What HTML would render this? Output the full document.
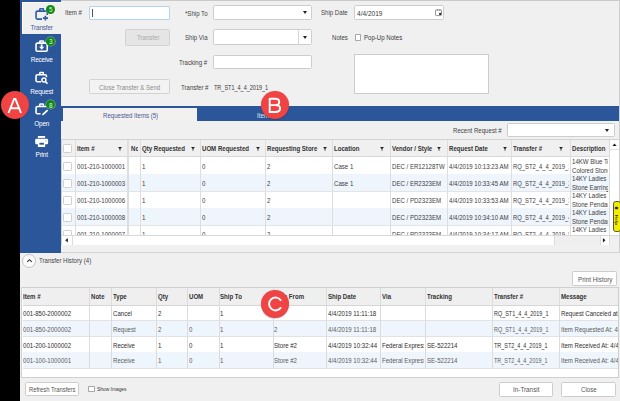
<!DOCTYPE html>
<html><head><meta charset="utf-8"><style>
html,body{margin:0;padding:0}
body{width:620px;height:401px;position:relative;overflow:hidden;background:#f0f0f0;font-family:"Liberation Sans",sans-serif}
.t{position:absolute;white-space:nowrap;line-height:10px;font-family:"Liberation Sans",sans-serif}
.clip{overflow:hidden}
</style></head><body>
<div style="position:absolute;left:0px;top:0px;width:20px;height:401px;background:#000"></div>
<div style="position:absolute;left:20px;top:0px;width:41px;height:253px;background:#2b579a"></div>
<div style="position:absolute;left:22px;top:2px;width:39px;height:32px;background:#f0f0f0;border-left:1px solid #fff;border-top:1px solid #fff;box-sizing:border-box"></div>
<div style="position:absolute;left:61px;top:0px;width:559px;height:1px;background:#c9c9c9"></div>
<div class="t" style="left:65.40px;top:8.24px;font-size:6.8px;color:#444444;transform:scaleX(0.895);transform-origin:0 0;">Item #</div>
<div style="position:absolute;left:89px;top:6px;width:81px;height:14px;background:#fff;border:1px solid #b3d3f2;box-sizing:border-box;border-radius:1px"></div>
<div style="position:absolute;left:92.3px;top:8.8px;width:0.6px;height:8.2px;background:#555"></div>
<div style="position:absolute;left:125px;top:29px;width:45px;height:17px;background:#e5e5e5;border:1px solid #d2d2d2;box-sizing:border-box;border-radius:1.5px"></div>
<div class="t" style="left:137.30px;top:33.44px;font-size:6.8px;color:#a9a9a9;transform:scaleX(0.895);transform-origin:0 0;">Transfer</div>
<div style="position:absolute;left:89px;top:79px;width:81px;height:15px;background:#f3f3f3;border:1px solid #d2d2d2;box-sizing:border-box;border-radius:1.5px"></div>
<div class="t" style="left:99.40px;top:82.74px;font-size:6.8px;color:#8c8c8c;transform:scaleX(0.895);transform-origin:0 0;">Close Transfer &amp; Send</div>
<div class="t" style="left:184.80px;top:8.54px;font-size:6.8px;color:#444444;transform:scaleX(0.895);transform-origin:0 0;">*Ship To</div>
<div style="position:absolute;left:213px;top:5px;width:99px;height:15px;background:#fff;border:1px solid #cdcdcd;box-sizing:border-box;border-radius:1.5px"></div>
<div class="t" style="left:184.90px;top:33.44px;font-size:6.8px;color:#444444;transform:scaleX(0.895);transform-origin:0 0;">Ship Via</div>
<div style="position:absolute;left:213px;top:29px;width:99px;height:16px;background:#fff;border:1px solid #cdcdcd;box-sizing:border-box;border-radius:1.5px"></div>
<div style="position:absolute;left:298.2px;top:30.2px;width:1px;height:14.2px;background:#d8d8d8"></div>
<div class="t" style="left:179.20px;top:57.54px;font-size:6.8px;color:#444444;transform:scaleX(0.895);transform-origin:0 0;">Tracking #</div>
<div style="position:absolute;left:213px;top:55px;width:99px;height:14px;background:#fff;border:1px solid #cdcdcd;box-sizing:border-box;border-radius:1.5px"></div>
<div class="t" style="left:180.60px;top:82.74px;font-size:6.8px;color:#444444;transform:scaleX(0.895);transform-origin:0 0;">Transfer #</div>
<div class="t" style="left:213.90px;top:82.74px;font-size:6.8px;color:#3a3a3a;transform:scaleX(0.81);transform-origin:0 0;">TR_ST1_4_4_2019_1</div>
<svg style="position:absolute;left:303.1px;top:11.1px" width="4" height="3" viewBox="0 0 4 3"><path d="M0 0H4L2.0 3Z" fill="#222"/></svg>
<svg style="position:absolute;left:303.2px;top:35.9px" width="4" height="3" viewBox="0 0 4 3"><path d="M0 0H4L2.0 3Z" fill="#222"/></svg>
<div class="t" style="left:321.10px;top:8.34px;font-size:6.8px;color:#444444;transform:scaleX(0.895);transform-origin:0 0;">Ship Date</div>
<div style="position:absolute;left:354px;top:5px;width:90px;height:15px;background:#fff;border:1px solid #cdcdcd;box-sizing:border-box;border-radius:1.5px"></div>
<div class="t" style="left:356.80px;top:9.14px;font-size:6.8px;color:#3a3a3a;transform:scaleX(0.96);transform-origin:0 0;">4/4/2019</div>
<svg style="position:absolute;left:434px;top:8px" width="9" height="9" viewBox="434 8 9 9"><rect x="435.5" y="10" width="6" height="5.6" rx="0.8" fill="none" stroke="#8a8a8a" stroke-width="0.9"/><path d="M437.3 9V10.6M439.9 9V10.6" stroke="#777" stroke-width="0.9"/><rect x="439.2" y="12.9" width="2" height="2" fill="#222"/></svg>
<div class="t" style="left:331.50px;top:33.34px;font-size:6.8px;color:#444444;transform:scaleX(0.895);transform-origin:0 0;">Notes</div>
<div style="position:absolute;left:355px;top:34px;width:6px;height:7px;background:#fff;border:1px solid #a8a8a8;box-sizing:border-box;border-radius:0.8px"></div>
<div class="t" style="left:363.50px;top:33.34px;font-size:6.8px;color:#3a3a3a;transform:scaleX(0.895);transform-origin:0 0;">Pop-Up Notes</div>
<div style="position:absolute;left:354px;top:54px;width:135px;height:40px;background:#fff;border:1px solid #cdcdcd;box-sizing:border-box"></div>
<div style="position:absolute;left:61px;top:106px;width:558px;height:15px;background:#2b579a"></div>
<div style="position:absolute;left:63px;top:108px;width:134.2px;height:13px;background:#f2f1ef"></div>
<div class="t" style="left:103.10px;top:110.64px;font-size:6.8px;color:#475a94;transform:scaleX(0.895);transform-origin:0 0;">Requested Items (5)</div>
<div class="t" style="left:257.00px;top:110.64px;font-size:6.8px;color:#dfe6f2;transform:scaleX(0.895);transform-origin:0 0;">Items</div>
<div class="t" style="left:453.10px;top:126.24px;font-size:6.8px;color:#444444;transform:scaleX(0.895);transform-origin:0 0;">Recent Request #</div>
<div style="position:absolute;left:507px;top:123px;width:108px;height:14px;background:#fff;border:1px solid #cdcdcd;box-sizing:border-box;border-radius:1.5px"></div>
<svg style="position:absolute;left:605.4px;top:128.6px" width="4" height="3" viewBox="0 0 4 3"><path d="M0 0H4L2.0 3Z" fill="#222"/></svg>
<div style="position:absolute;left:61px;top:139px;width:559px;height:106px;background:#fff;border:1px solid #d2d2d2;box-sizing:border-box"></div>
<div style="position:absolute;left:62px;top:140px;width:547.5px;height:16.3px;background:#f0f0f0"></div>
<div style="position:absolute;left:62px;top:156.1px;width:547.5px;height:1.4px;background:#d9d9d9"></div>
<div style="position:absolute;left:62px;top:173.70000000000002px;width:547.5px;height:1px;background:#e4e4e4"></div>
<div style="position:absolute;left:62px;top:174.4px;width:547.5px;height:17px;background:#eef5fd"></div>
<div style="position:absolute;left:62px;top:190.70000000000002px;width:547.5px;height:1px;background:#e4e4e4"></div>
<div style="position:absolute;left:62px;top:207.70000000000002px;width:547.5px;height:1px;background:#e4e4e4"></div>
<div style="position:absolute;left:62px;top:208.4px;width:547.5px;height:17px;background:#eef5fd"></div>
<div style="position:absolute;left:62px;top:224.70000000000002px;width:547.5px;height:1px;background:#e4e4e4"></div>
<div style="position:absolute;left:62px;top:241.70000000000002px;width:547.5px;height:1px;background:#e4e4e4"></div>
<div style="position:absolute;left:75.2px;top:140px;width:1.1px;height:95px;background:#dedede"></div>
<div style="position:absolute;left:127.3px;top:140px;width:1.6px;height:95px;background:#dedede"></div>
<div style="position:absolute;left:140.29999999999998px;top:140px;width:1.1px;height:95px;background:#dedede"></div>
<div style="position:absolute;left:200.0px;top:140px;width:1.1px;height:95px;background:#dedede"></div>
<div style="position:absolute;left:264.9px;top:140px;width:1.1px;height:95px;background:#dedede"></div>
<div style="position:absolute;left:332.3px;top:140px;width:1.1px;height:95px;background:#dedede"></div>
<div style="position:absolute;left:389.5px;top:140px;width:1.1px;height:95px;background:#dedede"></div>
<div style="position:absolute;left:447.0px;top:140px;width:1.1px;height:95px;background:#dedede"></div>
<div style="position:absolute;left:510.8px;top:140px;width:1.1px;height:95px;background:#dedede"></div>
<div style="position:absolute;left:569.5px;top:140px;width:1.1px;height:95px;background:#dedede"></div>
<div class="t clip" style="left:76.30px;top:144.14px;width:41.50px;padding-left:1px;box-sizing:border-box;height:10px;font-size:6.8px;color:#333333;font-weight:bold;"><span style="display:inline-block;transform:scaleX(0.895);transform-origin:0 0">Item #</span></div>
<svg style="position:absolute;left:118.3px;top:146.9px" width="4" height="3.8" viewBox="118.3 146.9 4 3.8"><path d="M118.39999999999999 147H122.2L120.7 148.9V150.7H119.89999999999999V148.9Z" fill="#222"/></svg>
<div class="t clip" style="left:129.50px;top:144.14px;width:8.20px;padding-left:1px;box-sizing:border-box;height:10px;font-size:6.8px;color:#333333;font-weight:bold;"><span style="display:inline-block;transform:scaleX(0.895);transform-origin:0 0">Note</span></div>
<div class="t clip" style="left:141.40px;top:144.14px;width:48.80px;padding-left:1px;box-sizing:border-box;height:10px;font-size:6.8px;color:#333333;font-weight:bold;"><span style="display:inline-block;transform:scaleX(0.895);transform-origin:0 0">Qty Requested</span></div>
<svg style="position:absolute;left:190.7px;top:146.9px" width="4" height="3.8" viewBox="190.7 146.9 4 3.8"><path d="M190.79999999999998 147H194.6L193.1 148.9V150.7H192.29999999999998V148.9Z" fill="#222"/></svg>
<div class="t clip" style="left:201.10px;top:144.14px;width:54.30px;padding-left:1px;box-sizing:border-box;height:10px;font-size:6.8px;color:#333333;font-weight:bold;"><span style="display:inline-block;transform:scaleX(0.895);transform-origin:0 0">UOM Requested</span></div>
<svg style="position:absolute;left:255.89999999999998px;top:146.9px" width="4" height="3.8" viewBox="255.89999999999998 146.9 4 3.8"><path d="M255.99999999999997 147H259.79999999999995L258.29999999999995 148.9V150.7H257.5V148.9Z" fill="#222"/></svg>
<div class="t clip" style="left:266.00px;top:144.14px;width:56.70px;padding-left:1px;box-sizing:border-box;height:10px;font-size:6.8px;color:#333333;font-weight:bold;"><span style="display:inline-block;transform:scaleX(0.895);transform-origin:0 0">Requesting Store</span></div>
<svg style="position:absolute;left:323.2px;top:146.9px" width="4" height="3.8" viewBox="323.2 146.9 4 3.8"><path d="M323.3 147H327.09999999999997L325.59999999999997 148.9V150.7H324.8V148.9Z" fill="#222"/></svg>
<div class="t clip" style="left:333.40px;top:144.14px;width:46.10px;padding-left:1px;box-sizing:border-box;height:10px;font-size:6.8px;color:#333333;font-weight:bold;"><span style="display:inline-block;transform:scaleX(0.895);transform-origin:0 0">Location</span></div>
<svg style="position:absolute;left:380px;top:146.9px" width="4" height="3.8" viewBox="380 146.9 4 3.8"><path d="M380.1 147H383.9L382.4 148.9V150.7H381.6V148.9Z" fill="#222"/></svg>
<div class="t clip" style="left:390.60px;top:144.14px;width:46.30px;padding-left:1px;box-sizing:border-box;height:10px;font-size:6.8px;color:#333333;font-weight:bold;"><span style="display:inline-block;transform:scaleX(0.895);transform-origin:0 0">Vendor / Style</span></div>
<svg style="position:absolute;left:437.4px;top:146.9px" width="4" height="3.8" viewBox="437.4 146.9 4 3.8"><path d="M437.5 147H441.29999999999995L439.79999999999995 148.9V150.7H439.0V148.9Z" fill="#222"/></svg>
<div class="t clip" style="left:448.10px;top:144.14px;width:53.90px;padding-left:1px;box-sizing:border-box;height:10px;font-size:6.8px;color:#333333;font-weight:bold;"><span style="display:inline-block;transform:scaleX(0.895);transform-origin:0 0">Request Date</span></div>
<svg style="position:absolute;left:502.5px;top:146.9px" width="4" height="3.8" viewBox="502.5 146.9 4 3.8"><path d="M502.6 147H506.4L504.9 148.9V150.7H504.1V148.9Z" fill="#222"/></svg>
<div class="t clip" style="left:511.90px;top:144.14px;width:47.00px;padding-left:1px;box-sizing:border-box;height:10px;font-size:6.8px;color:#333333;font-weight:bold;"><span style="display:inline-block;transform:scaleX(0.895);transform-origin:0 0">Transfer #</span></div>
<svg style="position:absolute;left:559.4px;top:146.9px" width="4" height="3.8" viewBox="559.4 146.9 4 3.8"><path d="M559.5 147H563.3L561.8 148.9V150.7H561.0V148.9Z" fill="#222"/></svg>
<div class="t clip" style="left:570.60px;top:144.14px;width:37.80px;padding-left:1px;box-sizing:border-box;height:10px;font-size:6.8px;color:#333333;font-weight:bold;"><span style="display:inline-block;transform:scaleX(0.895);transform-origin:0 0">Description</span></div>
<div style="position:absolute;left:63px;top:144px;width:9px;height:9px;background:#fff;border:1px solid #d0d0d0;box-sizing:border-box;border-radius:1.2px"></div>
<div style="position:absolute;left:63px;top:162px;width:9px;height:9px;background:#fff;border:1px solid #d0d0d0;box-sizing:border-box;border-radius:1.2px"></div>
<div class="t clip" style="left:76.30px;top:162.04px;width:50.50px;padding-left:1px;box-sizing:border-box;height:10px;font-size:6.8px;color:#404040;"><span style="display:inline-block;transform:scaleX(0.895);transform-origin:0 0">001-210-1000001</span></div>
<div class="t clip" style="left:141.40px;top:162.04px;width:58.10px;padding-left:1px;box-sizing:border-box;height:10px;font-size:6.8px;color:#404040;"><span style="display:inline-block;transform:scaleX(0.895);transform-origin:0 0">1</span></div>
<div class="t clip" style="left:201.10px;top:162.04px;width:63.30px;padding-left:1px;box-sizing:border-box;height:10px;font-size:6.8px;color:#404040;"><span style="display:inline-block;transform:scaleX(0.895);transform-origin:0 0">0</span></div>
<div class="t clip" style="left:266.00px;top:162.04px;width:65.80px;padding-left:1px;box-sizing:border-box;height:10px;font-size:6.8px;color:#404040;"><span style="display:inline-block;transform:scaleX(0.895);transform-origin:0 0">2</span></div>
<div class="t clip" style="left:333.40px;top:162.04px;width:55.60px;padding-left:1px;box-sizing:border-box;height:10px;font-size:6.8px;color:#404040;"><span style="display:inline-block;transform:scaleX(0.895);transform-origin:0 0">Case 1</span></div>
<div class="t clip" style="left:390.60px;top:162.04px;width:55.90px;padding-left:1px;box-sizing:border-box;height:10px;font-size:6.8px;color:#404040;"><span style="display:inline-block;transform:scaleX(0.895);transform-origin:0 0">DEC / ER12128TW</span></div>
<div class="t clip" style="left:448.10px;top:162.04px;width:62.20px;padding-left:1px;box-sizing:border-box;height:10px;font-size:6.8px;color:#404040;"><span style="display:inline-block;transform:scaleX(0.895);transform-origin:0 0">4/4/2019 10:13:23 AM</span></div>
<div class="t clip" style="left:511.90px;top:162.04px;width:57.10px;padding-left:1px;box-sizing:border-box;height:10px;font-size:6.8px;color:#404040;"><span style="display:inline-block;transform:scaleX(0.86);transform-origin:0 0">RQ_ST2_4_4_2019_1</span></div>
<div class="t clip" style="left:570.60px;top:157.44px;width:37.80px;padding-left:1px;box-sizing:border-box;height:10px;font-size:6.8px;color:#404040;"><span style="display:inline-block;transform:scaleX(0.895);transform-origin:0 0">14KW Blue Topaz</span></div>
<div class="t clip" style="left:570.60px;top:165.94px;width:37.80px;padding-left:1px;box-sizing:border-box;height:10px;font-size:6.8px;color:#404040;"><span style="display:inline-block;transform:scaleX(0.895);transform-origin:0 0">Colored Stone</span></div>
<div style="position:absolute;left:63px;top:179px;width:9px;height:9px;background:#fff;border:1px solid #d0d0d0;box-sizing:border-box;border-radius:1.2px"></div>
<div class="t clip" style="left:76.30px;top:179.04px;width:50.50px;padding-left:1px;box-sizing:border-box;height:10px;font-size:6.8px;color:#404040;"><span style="display:inline-block;transform:scaleX(0.895);transform-origin:0 0">001-210-1000003</span></div>
<div class="t clip" style="left:141.40px;top:179.04px;width:58.10px;padding-left:1px;box-sizing:border-box;height:10px;font-size:6.8px;color:#404040;"><span style="display:inline-block;transform:scaleX(0.895);transform-origin:0 0">1</span></div>
<div class="t clip" style="left:201.10px;top:179.04px;width:63.30px;padding-left:1px;box-sizing:border-box;height:10px;font-size:6.8px;color:#404040;"><span style="display:inline-block;transform:scaleX(0.895);transform-origin:0 0">0</span></div>
<div class="t clip" style="left:266.00px;top:179.04px;width:65.80px;padding-left:1px;box-sizing:border-box;height:10px;font-size:6.8px;color:#404040;"><span style="display:inline-block;transform:scaleX(0.895);transform-origin:0 0">2</span></div>
<div class="t clip" style="left:333.40px;top:179.04px;width:55.60px;padding-left:1px;box-sizing:border-box;height:10px;font-size:6.8px;color:#404040;"><span style="display:inline-block;transform:scaleX(0.895);transform-origin:0 0">Case 1</span></div>
<div class="t clip" style="left:390.60px;top:179.04px;width:55.90px;padding-left:1px;box-sizing:border-box;height:10px;font-size:6.8px;color:#404040;"><span style="display:inline-block;transform:scaleX(0.895);transform-origin:0 0">DEC / ER2323EM</span></div>
<div class="t clip" style="left:448.10px;top:179.04px;width:62.20px;padding-left:1px;box-sizing:border-box;height:10px;font-size:6.8px;color:#404040;"><span style="display:inline-block;transform:scaleX(0.895);transform-origin:0 0">4/4/2019 10:33:45 AM</span></div>
<div class="t clip" style="left:511.90px;top:179.04px;width:57.10px;padding-left:1px;box-sizing:border-box;height:10px;font-size:6.8px;color:#404040;"><span style="display:inline-block;transform:scaleX(0.86);transform-origin:0 0">RQ_ST2_4_4_2019_2</span></div>
<div class="t clip" style="left:570.60px;top:174.44px;width:37.80px;padding-left:1px;box-sizing:border-box;height:10px;font-size:6.8px;color:#404040;"><span style="display:inline-block;transform:scaleX(0.895);transform-origin:0 0">14KY Ladies Earring</span></div>
<div class="t clip" style="left:570.60px;top:182.94px;width:37.80px;padding-left:1px;box-sizing:border-box;height:10px;font-size:6.8px;color:#404040;"><span style="display:inline-block;transform:scaleX(0.895);transform-origin:0 0">Stone Earring</span></div>
<div style="position:absolute;left:63px;top:196px;width:9px;height:9px;background:#fff;border:1px solid #d0d0d0;box-sizing:border-box;border-radius:1.2px"></div>
<div class="t clip" style="left:76.30px;top:196.04px;width:50.50px;padding-left:1px;box-sizing:border-box;height:10px;font-size:6.8px;color:#404040;"><span style="display:inline-block;transform:scaleX(0.895);transform-origin:0 0">001-210-1000006</span></div>
<div class="t clip" style="left:141.40px;top:196.04px;width:58.10px;padding-left:1px;box-sizing:border-box;height:10px;font-size:6.8px;color:#404040;"><span style="display:inline-block;transform:scaleX(0.895);transform-origin:0 0">1</span></div>
<div class="t clip" style="left:201.10px;top:196.04px;width:63.30px;padding-left:1px;box-sizing:border-box;height:10px;font-size:6.8px;color:#404040;"><span style="display:inline-block;transform:scaleX(0.895);transform-origin:0 0">0</span></div>
<div class="t clip" style="left:266.00px;top:196.04px;width:65.80px;padding-left:1px;box-sizing:border-box;height:10px;font-size:6.8px;color:#404040;"><span style="display:inline-block;transform:scaleX(0.895);transform-origin:0 0">2</span></div>
<div class="t clip" style="left:390.60px;top:196.04px;width:55.90px;padding-left:1px;box-sizing:border-box;height:10px;font-size:6.8px;color:#404040;"><span style="display:inline-block;transform:scaleX(0.895);transform-origin:0 0">DEC / PD2323EM</span></div>
<div class="t clip" style="left:448.10px;top:196.04px;width:62.20px;padding-left:1px;box-sizing:border-box;height:10px;font-size:6.8px;color:#404040;"><span style="display:inline-block;transform:scaleX(0.895);transform-origin:0 0">4/4/2019 10:33:53 AM</span></div>
<div class="t clip" style="left:511.90px;top:196.04px;width:57.10px;padding-left:1px;box-sizing:border-box;height:10px;font-size:6.8px;color:#404040;"><span style="display:inline-block;transform:scaleX(0.86);transform-origin:0 0">RQ_ST2_4_4_2019_3</span></div>
<div class="t clip" style="left:570.60px;top:191.44px;width:37.80px;padding-left:1px;box-sizing:border-box;height:10px;font-size:6.8px;color:#404040;"><span style="display:inline-block;transform:scaleX(0.895);transform-origin:0 0">14KY Ladies Earring</span></div>
<div class="t clip" style="left:570.60px;top:199.94px;width:37.80px;padding-left:1px;box-sizing:border-box;height:10px;font-size:6.8px;color:#404040;"><span style="display:inline-block;transform:scaleX(0.895);transform-origin:0 0">Stone Pendant</span></div>
<div style="position:absolute;left:63px;top:213px;width:9px;height:9px;background:#fff;border:1px solid #d0d0d0;box-sizing:border-box;border-radius:1.2px"></div>
<div class="t clip" style="left:76.30px;top:213.04px;width:50.50px;padding-left:1px;box-sizing:border-box;height:10px;font-size:6.8px;color:#404040;"><span style="display:inline-block;transform:scaleX(0.895);transform-origin:0 0">001-210-1000008</span></div>
<div class="t clip" style="left:141.40px;top:213.04px;width:58.10px;padding-left:1px;box-sizing:border-box;height:10px;font-size:6.8px;color:#404040;"><span style="display:inline-block;transform:scaleX(0.895);transform-origin:0 0">1</span></div>
<div class="t clip" style="left:201.10px;top:213.04px;width:63.30px;padding-left:1px;box-sizing:border-box;height:10px;font-size:6.8px;color:#404040;"><span style="display:inline-block;transform:scaleX(0.895);transform-origin:0 0">0</span></div>
<div class="t clip" style="left:266.00px;top:213.04px;width:65.80px;padding-left:1px;box-sizing:border-box;height:10px;font-size:6.8px;color:#404040;"><span style="display:inline-block;transform:scaleX(0.895);transform-origin:0 0">2</span></div>
<div class="t clip" style="left:390.60px;top:213.04px;width:55.90px;padding-left:1px;box-sizing:border-box;height:10px;font-size:6.8px;color:#404040;"><span style="display:inline-block;transform:scaleX(0.895);transform-origin:0 0">DEC / PD2323EM</span></div>
<div class="t clip" style="left:448.10px;top:213.04px;width:62.20px;padding-left:1px;box-sizing:border-box;height:10px;font-size:6.8px;color:#404040;"><span style="display:inline-block;transform:scaleX(0.895);transform-origin:0 0">4/4/2019 10:34:10 AM</span></div>
<div class="t clip" style="left:511.90px;top:213.04px;width:57.10px;padding-left:1px;box-sizing:border-box;height:10px;font-size:6.8px;color:#404040;"><span style="display:inline-block;transform:scaleX(0.86);transform-origin:0 0">RQ_ST2_4_4_2019_4</span></div>
<div class="t clip" style="left:570.60px;top:208.44px;width:37.80px;padding-left:1px;box-sizing:border-box;height:10px;font-size:6.8px;color:#404040;"><span style="display:inline-block;transform:scaleX(0.895);transform-origin:0 0">14KY Ladies Earring</span></div>
<div class="t clip" style="left:570.60px;top:216.94px;width:37.80px;padding-left:1px;box-sizing:border-box;height:10px;font-size:6.8px;color:#404040;"><span style="display:inline-block;transform:scaleX(0.895);transform-origin:0 0">Stone Pendant</span></div>
<div style="position:absolute;left:63px;top:230px;width:9px;height:9px;background:#fff;border:1px solid #d0d0d0;box-sizing:border-box;border-radius:1.2px"></div>
<div class="t clip" style="left:76.30px;top:230.04px;width:50.50px;padding-left:1px;box-sizing:border-box;height:10px;font-size:6.8px;color:#404040;"><span style="display:inline-block;transform:scaleX(0.895);transform-origin:0 0">001-210-1000007</span></div>
<div class="t clip" style="left:141.40px;top:230.04px;width:58.10px;padding-left:1px;box-sizing:border-box;height:10px;font-size:6.8px;color:#404040;"><span style="display:inline-block;transform:scaleX(0.895);transform-origin:0 0">1</span></div>
<div class="t clip" style="left:201.10px;top:230.04px;width:63.30px;padding-left:1px;box-sizing:border-box;height:10px;font-size:6.8px;color:#404040;"><span style="display:inline-block;transform:scaleX(0.895);transform-origin:0 0">0</span></div>
<div class="t clip" style="left:266.00px;top:230.04px;width:65.80px;padding-left:1px;box-sizing:border-box;height:10px;font-size:6.8px;color:#404040;"><span style="display:inline-block;transform:scaleX(0.895);transform-origin:0 0">2</span></div>
<div class="t clip" style="left:390.60px;top:230.04px;width:55.90px;padding-left:1px;box-sizing:border-box;height:10px;font-size:6.8px;color:#404040;"><span style="display:inline-block;transform:scaleX(0.895);transform-origin:0 0">DEC / PD2323EM</span></div>
<div class="t clip" style="left:448.10px;top:230.04px;width:62.20px;padding-left:1px;box-sizing:border-box;height:10px;font-size:6.8px;color:#404040;"><span style="display:inline-block;transform:scaleX(0.895);transform-origin:0 0">4/4/2019 10:34:17 AM</span></div>
<div class="t clip" style="left:511.90px;top:230.04px;width:57.10px;padding-left:1px;box-sizing:border-box;height:10px;font-size:6.8px;color:#404040;"><span style="display:inline-block;transform:scaleX(0.86);transform-origin:0 0">RQ_ST2_4_4_2019_5</span></div>
<div class="t clip" style="left:570.60px;top:225.44px;width:37.80px;padding-left:1px;box-sizing:border-box;height:10px;font-size:6.8px;color:#404040;"><span style="display:inline-block;transform:scaleX(0.895);transform-origin:0 0">14KY Ladies Earring</span></div>
<div class="t clip" style="left:570.60px;top:233.94px;width:37.80px;padding-left:1px;box-sizing:border-box;height:10px;font-size:6.8px;color:#404040;"><span style="display:inline-block;transform:scaleX(0.895);transform-origin:0 0">Stone Pendant</span></div>
<div style="position:absolute;left:62px;top:235px;width:547px;height:10px;background:#efefef;border-top:1px solid #d8d8d8;box-sizing:border-box"></div>
<div style="position:absolute;left:62px;top:235.6px;width:9.5px;height:9px;background:#fff"></div>
<div style="position:absolute;left:72px;top:236px;width:483px;height:9px;background:#fff;border-left:1px solid #dcdcdc;border-right:1px solid #dcdcdc;box-sizing:border-box"></div>
<svg style="position:absolute;left:65px;top:237.5px" width="3" height="5" viewBox="65 237.5 3 5"><path d="M67.8 237.6V242.1L65.2 239.85Z" fill="#222"/></svg>
<div style="position:absolute;left:600px;top:236px;width:9px;height:9px;background:#fff;border-left:1px solid #dcdcdc;box-sizing:border-box"></div>
<svg style="position:absolute;left:602px;top:237.5px" width="4" height="5" viewBox="602 237.5 4 5"><path d="M602.9 237.6V242.1L605.5 239.85Z" fill="#222"/></svg>
<div style="position:absolute;left:609px;top:140px;width:10px;height:95px;background:#fff;border-left:1px solid #dcdcdc;box-sizing:border-box"></div>
<div style="position:absolute;left:609.2px;top:149.2px;width:9.8px;height:1px;background:#e2e2e2"></div>
<svg style="position:absolute;left:611px;top:142px" width="6" height="5" viewBox="611 142 6 5"><path d="M612.3 146H616.7L614.5 143.5Z" fill="#222"/></svg>
<div style="position:absolute;left:609px;top:235px;width:10px;height:10px;background:#f0f0f0;border-left:1px solid #dcdcdc;border-top:1px solid #d8d8d8;box-sizing:border-box"></div>
<div style="position:absolute;left:619px;top:0px;width:1px;height:253px;background:#cfcfcf"></div>
<div style="position:absolute;left:613.2px;top:200.9px;width:8px;height:30.8px;background:#f3ee00;border:0.9px solid #5a5830;border-radius:2.8px;box-sizing:border-box"></div>
<div style="position:absolute;left:615.1px;top:206.8px;width:2.5px;height:2.5px;border-radius:50%;background:#1e2448;box-shadow:0 0 0 0.5px #888"></div>
<div class="t" style="left:608.4px;top:218px;width:16px;height:4px;font-size:4.2px;line-height:4px;text-align:center;color:#2a2a2a;font-weight:bold;letter-spacing:0.3px;transform:rotate(90deg)">Help</div>
<div style="position:absolute;left:61px;top:252px;width:559px;height:1px;background:#d4d4d4"></div>
<div style="position:absolute;left:22.1px;top:253.8px;width:14.3px;height:14.3px;border-radius:50%;background:#fbfbfb;border:1px solid #c4c4c4;box-sizing:border-box"></div>
<svg style="position:absolute;left:26px;top:258px" width="7" height="5" viewBox="26 258 7 5"><path d="M27.2 261.8L29.5 259.7L31.8 261.8" fill="none" stroke="#333" stroke-width="1.1"/></svg>
<div class="t" style="left:39.30px;top:256.44px;font-size:6.8px;color:#444;transform:scaleX(0.895);transform-origin:0 0;">Transfer History (4)</div>
<div style="position:absolute;left:572px;top:271px;width:45px;height:15px;background:#fff;border:1px solid #cdcdcd;box-sizing:border-box;border-radius:1.5px"></div>
<div class="t" style="left:578.10px;top:274.64px;font-size:6.8px;color:#555;transform:scaleX(0.93);transform-origin:0 0;">Print History</div>
<div style="position:absolute;left:21px;top:287px;width:598px;height:91px;background:#fff;border:1px solid #cfcfcf;box-sizing:border-box"></div>
<div style="position:absolute;left:22.5px;top:288.2px;width:595px;height:17px;background:#efefef"></div>
<div style="position:absolute;left:22.5px;top:304.7px;width:595px;height:1px;background:#d6d6d6"></div>
<div style="position:absolute;left:22.5px;top:320.4px;width:595px;height:1px;background:#e2e2e2"></div>
<div style="position:absolute;left:22.5px;top:320.9px;width:595px;height:15.7px;background:#eef5fc"></div>
<div style="position:absolute;left:22.5px;top:336.09999999999997px;width:595px;height:1px;background:#e2e2e2"></div>
<div style="position:absolute;left:22.5px;top:351.79999999999995px;width:595px;height:1px;background:#e2e2e2"></div>
<div style="position:absolute;left:22.5px;top:352.29999999999995px;width:595px;height:15.7px;background:#eef5fc"></div>
<div style="position:absolute;left:22.5px;top:367.49999999999994px;width:595px;height:1px;background:#e2e2e2"></div>
<div style="position:absolute;left:88.8px;top:288.2px;width:1px;height:79.8px;background:#dcdcdc"></div>
<div style="position:absolute;left:111.3px;top:288.2px;width:1px;height:79.8px;background:#dcdcdc"></div>
<div style="position:absolute;left:156.2px;top:288.2px;width:1px;height:79.8px;background:#dcdcdc"></div>
<div style="position:absolute;left:187.4px;top:288.2px;width:1px;height:79.8px;background:#dcdcdc"></div>
<div style="position:absolute;left:218.5px;top:288.2px;width:1px;height:79.8px;background:#dcdcdc"></div>
<div style="position:absolute;left:272.6px;top:288.2px;width:1px;height:79.8px;background:#dcdcdc"></div>
<div style="position:absolute;left:326.3px;top:288.2px;width:1px;height:79.8px;background:#dcdcdc"></div>
<div style="position:absolute;left:380.2px;top:288.2px;width:1px;height:79.8px;background:#dcdcdc"></div>
<div style="position:absolute;left:425.2px;top:288.2px;width:1px;height:79.8px;background:#dcdcdc"></div>
<div style="position:absolute;left:492.2px;top:288.2px;width:1px;height:79.8px;background:#dcdcdc"></div>
<div style="position:absolute;left:559.3px;top:288.2px;width:1px;height:79.8px;background:#dcdcdc"></div>
<div class="t clip" style="left:22.30px;top:292.04px;width:65.70px;padding-left:1px;box-sizing:border-box;height:10px;font-size:6.8px;color:#333333;font-weight:bold;"><span style="display:inline-block;transform:scaleX(0.895);transform-origin:0 0">Item #</span></div>
<div class="t clip" style="left:89.60px;top:292.04px;width:20.90px;padding-left:1px;box-sizing:border-box;height:10px;font-size:6.8px;color:#333333;font-weight:bold;"><span style="display:inline-block;transform:scaleX(0.895);transform-origin:0 0">Note</span></div>
<div class="t clip" style="left:112.10px;top:292.04px;width:43.30px;padding-left:1px;box-sizing:border-box;height:10px;font-size:6.8px;color:#333333;font-weight:bold;"><span style="display:inline-block;transform:scaleX(0.895);transform-origin:0 0">Type</span></div>
<div class="t clip" style="left:157.00px;top:292.04px;width:29.60px;padding-left:1px;box-sizing:border-box;height:10px;font-size:6.8px;color:#333333;font-weight:bold;"><span style="display:inline-block;transform:scaleX(0.895);transform-origin:0 0">Qty</span></div>
<div class="t clip" style="left:188.20px;top:292.04px;width:29.50px;padding-left:1px;box-sizing:border-box;height:10px;font-size:6.8px;color:#333333;font-weight:bold;"><span style="display:inline-block;transform:scaleX(0.895);transform-origin:0 0">UOM</span></div>
<div class="t clip" style="left:219.30px;top:292.04px;width:52.50px;padding-left:1px;box-sizing:border-box;height:10px;font-size:6.8px;color:#333333;font-weight:bold;"><span style="display:inline-block;transform:scaleX(0.895);transform-origin:0 0">Ship To</span></div>
<div class="t clip" style="left:273.40px;top:292.04px;width:52.10px;padding-left:1px;box-sizing:border-box;height:10px;font-size:6.8px;color:#333333;font-weight:bold;"><span style="display:inline-block;transform:scaleX(0.895);transform-origin:0 0">Ship From</span></div>
<div class="t clip" style="left:327.10px;top:292.04px;width:52.30px;padding-left:1px;box-sizing:border-box;height:10px;font-size:6.8px;color:#333333;font-weight:bold;"><span style="display:inline-block;transform:scaleX(0.895);transform-origin:0 0">Ship Date</span></div>
<div class="t clip" style="left:381.00px;top:292.04px;width:43.40px;padding-left:1px;box-sizing:border-box;height:10px;font-size:6.8px;color:#333333;font-weight:bold;"><span style="display:inline-block;transform:scaleX(0.895);transform-origin:0 0">Via</span></div>
<div class="t clip" style="left:426.00px;top:292.04px;width:65.40px;padding-left:1px;box-sizing:border-box;height:10px;font-size:6.8px;color:#333333;font-weight:bold;"><span style="display:inline-block;transform:scaleX(0.895);transform-origin:0 0">Tracking</span></div>
<div class="t clip" style="left:493.00px;top:292.04px;width:65.50px;padding-left:1px;box-sizing:border-box;height:10px;font-size:6.8px;color:#333333;font-weight:bold;"><span style="display:inline-block;transform:scaleX(0.895);transform-origin:0 0">Transfer #</span></div>
<div class="t clip" style="left:560.10px;top:292.04px;width:57.60px;padding-left:1px;box-sizing:border-box;height:10px;font-size:6.8px;color:#333333;font-weight:bold;"><span style="display:inline-block;transform:scaleX(0.895);transform-origin:0 0">Message</span></div>
<div class="t clip" style="left:22.30px;top:309.24px;width:65.70px;padding-left:1px;box-sizing:border-box;height:10px;font-size:6.8px;color:#2e2e2e;"><span style="display:inline-block;transform:scaleX(0.895);transform-origin:0 0">001-850-2000002</span></div>
<div class="t clip" style="left:112.10px;top:309.24px;width:43.30px;padding-left:1px;box-sizing:border-box;height:10px;font-size:6.8px;color:#2e2e2e;"><span style="display:inline-block;transform:scaleX(0.895);transform-origin:0 0">Cancel</span></div>
<div class="t clip" style="left:157.00px;top:309.24px;width:29.60px;padding-left:1px;box-sizing:border-box;height:10px;font-size:6.8px;color:#2e2e2e;"><span style="display:inline-block;transform:scaleX(0.895);transform-origin:0 0">2</span></div>
<div class="t clip" style="left:219.30px;top:309.24px;width:52.50px;padding-left:1px;box-sizing:border-box;height:10px;font-size:6.8px;color:#2e2e2e;"><span style="display:inline-block;transform:scaleX(0.895);transform-origin:0 0">1</span></div>
<div class="t clip" style="left:327.10px;top:309.24px;width:52.30px;padding-left:1px;box-sizing:border-box;height:10px;font-size:6.8px;color:#2e2e2e;"><span style="display:inline-block;transform:scaleX(0.895);transform-origin:0 0">4/4/2019 11:11:18</span></div>
<div class="t clip" style="left:493.00px;top:309.24px;width:65.50px;padding-left:1px;box-sizing:border-box;height:10px;font-size:6.8px;color:#2e2e2e;"><span style="display:inline-block;transform:scaleX(0.8);transform-origin:0 0">RQ_ST1_4_4_2019_1</span></div>
<div class="t clip" style="left:560.10px;top:309.24px;width:57.60px;padding-left:1px;box-sizing:border-box;height:10px;font-size:6.8px;color:#2e2e2e;"><span style="display:inline-block;transform:scaleX(0.895);transform-origin:0 0">Request Canceled at 4/4/2019</span></div>
<div class="t clip" style="left:22.30px;top:324.94px;width:65.70px;padding-left:1px;box-sizing:border-box;height:10px;font-size:6.8px;color:#5c5c5c;"><span style="display:inline-block;transform:scaleX(0.895);transform-origin:0 0">001-850-2000002</span></div>
<div class="t clip" style="left:112.10px;top:324.94px;width:43.30px;padding-left:1px;box-sizing:border-box;height:10px;font-size:6.8px;color:#5c5c5c;"><span style="display:inline-block;transform:scaleX(0.895);transform-origin:0 0">Request</span></div>
<div class="t clip" style="left:157.00px;top:324.94px;width:29.60px;padding-left:1px;box-sizing:border-box;height:10px;font-size:6.8px;color:#5c5c5c;"><span style="display:inline-block;transform:scaleX(0.895);transform-origin:0 0">2</span></div>
<div class="t clip" style="left:188.20px;top:324.94px;width:29.50px;padding-left:1px;box-sizing:border-box;height:10px;font-size:6.8px;color:#5c5c5c;"><span style="display:inline-block;transform:scaleX(0.895);transform-origin:0 0">0</span></div>
<div class="t clip" style="left:219.30px;top:324.94px;width:52.50px;padding-left:1px;box-sizing:border-box;height:10px;font-size:6.8px;color:#5c5c5c;"><span style="display:inline-block;transform:scaleX(0.895);transform-origin:0 0">1</span></div>
<div class="t clip" style="left:273.40px;top:324.94px;width:52.10px;padding-left:1px;box-sizing:border-box;height:10px;font-size:6.8px;color:#5c5c5c;"><span style="display:inline-block;transform:scaleX(0.895);transform-origin:0 0">2</span></div>
<div class="t clip" style="left:327.10px;top:324.94px;width:52.30px;padding-left:1px;box-sizing:border-box;height:10px;font-size:6.8px;color:#5c5c5c;"><span style="display:inline-block;transform:scaleX(0.895);transform-origin:0 0">4/4/2019 11:11:18</span></div>
<div class="t clip" style="left:493.00px;top:324.94px;width:65.50px;padding-left:1px;box-sizing:border-box;height:10px;font-size:6.8px;color:#5c5c5c;"><span style="display:inline-block;transform:scaleX(0.8);transform-origin:0 0">RQ_ST1_4_4_2019_1</span></div>
<div class="t clip" style="left:560.10px;top:324.94px;width:57.60px;padding-left:1px;box-sizing:border-box;height:10px;font-size:6.8px;color:#5c5c5c;"><span style="display:inline-block;transform:scaleX(0.895);transform-origin:0 0">Item Requested At: 4/4/2019</span></div>
<div class="t clip" style="left:22.30px;top:340.64px;width:65.70px;padding-left:1px;box-sizing:border-box;height:10px;font-size:6.8px;color:#2e2e2e;"><span style="display:inline-block;transform:scaleX(0.895);transform-origin:0 0">001-200-1000002</span></div>
<div class="t clip" style="left:112.10px;top:340.64px;width:43.30px;padding-left:1px;box-sizing:border-box;height:10px;font-size:6.8px;color:#2e2e2e;"><span style="display:inline-block;transform:scaleX(0.895);transform-origin:0 0">Receive</span></div>
<div class="t clip" style="left:157.00px;top:340.64px;width:29.60px;padding-left:1px;box-sizing:border-box;height:10px;font-size:6.8px;color:#2e2e2e;"><span style="display:inline-block;transform:scaleX(0.895);transform-origin:0 0">1</span></div>
<div class="t clip" style="left:188.20px;top:340.64px;width:29.50px;padding-left:1px;box-sizing:border-box;height:10px;font-size:6.8px;color:#2e2e2e;"><span style="display:inline-block;transform:scaleX(0.895);transform-origin:0 0">0</span></div>
<div class="t clip" style="left:219.30px;top:340.64px;width:52.50px;padding-left:1px;box-sizing:border-box;height:10px;font-size:6.8px;color:#2e2e2e;"><span style="display:inline-block;transform:scaleX(0.895);transform-origin:0 0">1</span></div>
<div class="t clip" style="left:273.40px;top:340.64px;width:52.10px;padding-left:1px;box-sizing:border-box;height:10px;font-size:6.8px;color:#2e2e2e;"><span style="display:inline-block;transform:scaleX(0.895);transform-origin:0 0">Store #2</span></div>
<div class="t clip" style="left:327.10px;top:340.64px;width:52.30px;padding-left:1px;box-sizing:border-box;height:10px;font-size:6.8px;color:#2e2e2e;"><span style="display:inline-block;transform:scaleX(0.895);transform-origin:0 0">4/4/2019 10:32:44</span></div>
<div class="t clip" style="left:381.00px;top:340.64px;width:43.40px;padding-left:1px;box-sizing:border-box;height:10px;font-size:6.8px;color:#2e2e2e;"><span style="display:inline-block;transform:scaleX(0.895);transform-origin:0 0">Federal Express</span></div>
<div class="t clip" style="left:426.00px;top:340.64px;width:65.40px;padding-left:1px;box-sizing:border-box;height:10px;font-size:6.8px;color:#2e2e2e;"><span style="display:inline-block;transform:scaleX(0.895);transform-origin:0 0">SE-522214</span></div>
<div class="t clip" style="left:493.00px;top:340.64px;width:65.50px;padding-left:1px;box-sizing:border-box;height:10px;font-size:6.8px;color:#2e2e2e;"><span style="display:inline-block;transform:scaleX(0.8);transform-origin:0 0">TR_ST2_4_4_2019_1</span></div>
<div class="t clip" style="left:560.10px;top:340.64px;width:57.60px;padding-left:1px;box-sizing:border-box;height:10px;font-size:6.8px;color:#2e2e2e;"><span style="display:inline-block;transform:scaleX(0.895);transform-origin:0 0">Item Received At: 4/4/2019</span></div>
<div class="t clip" style="left:22.30px;top:356.34px;width:65.70px;padding-left:1px;box-sizing:border-box;height:10px;font-size:6.8px;color:#5c5c5c;"><span style="display:inline-block;transform:scaleX(0.895);transform-origin:0 0">001-100-1000001</span></div>
<div class="t clip" style="left:112.10px;top:356.34px;width:43.30px;padding-left:1px;box-sizing:border-box;height:10px;font-size:6.8px;color:#5c5c5c;"><span style="display:inline-block;transform:scaleX(0.895);transform-origin:0 0">Receive</span></div>
<div class="t clip" style="left:157.00px;top:356.34px;width:29.60px;padding-left:1px;box-sizing:border-box;height:10px;font-size:6.8px;color:#5c5c5c;"><span style="display:inline-block;transform:scaleX(0.895);transform-origin:0 0">1</span></div>
<div class="t clip" style="left:188.20px;top:356.34px;width:29.50px;padding-left:1px;box-sizing:border-box;height:10px;font-size:6.8px;color:#5c5c5c;"><span style="display:inline-block;transform:scaleX(0.895);transform-origin:0 0">0</span></div>
<div class="t clip" style="left:219.30px;top:356.34px;width:52.50px;padding-left:1px;box-sizing:border-box;height:10px;font-size:6.8px;color:#5c5c5c;"><span style="display:inline-block;transform:scaleX(0.895);transform-origin:0 0">1</span></div>
<div class="t clip" style="left:273.40px;top:356.34px;width:52.10px;padding-left:1px;box-sizing:border-box;height:10px;font-size:6.8px;color:#5c5c5c;"><span style="display:inline-block;transform:scaleX(0.895);transform-origin:0 0">Store #2</span></div>
<div class="t clip" style="left:327.10px;top:356.34px;width:52.30px;padding-left:1px;box-sizing:border-box;height:10px;font-size:6.8px;color:#5c5c5c;"><span style="display:inline-block;transform:scaleX(0.895);transform-origin:0 0">4/4/2019 10:32:44</span></div>
<div class="t clip" style="left:381.00px;top:356.34px;width:43.40px;padding-left:1px;box-sizing:border-box;height:10px;font-size:6.8px;color:#5c5c5c;"><span style="display:inline-block;transform:scaleX(0.895);transform-origin:0 0">Federal Express</span></div>
<div class="t clip" style="left:426.00px;top:356.34px;width:65.40px;padding-left:1px;box-sizing:border-box;height:10px;font-size:6.8px;color:#5c5c5c;"><span style="display:inline-block;transform:scaleX(0.895);transform-origin:0 0">SE-522214</span></div>
<div class="t clip" style="left:493.00px;top:356.34px;width:65.50px;padding-left:1px;box-sizing:border-box;height:10px;font-size:6.8px;color:#5c5c5c;"><span style="display:inline-block;transform:scaleX(0.8);transform-origin:0 0">TR_ST2_4_4_2019_1</span></div>
<div class="t clip" style="left:560.10px;top:356.34px;width:57.60px;padding-left:1px;box-sizing:border-box;height:10px;font-size:6.8px;color:#5c5c5c;"><span style="display:inline-block;transform:scaleX(0.895);transform-origin:0 0">Item Received At: 4/4/2019</span></div>
<div style="position:absolute;left:25px;top:382px;width:54px;height:14px;background:#fff;border:1px solid #cdcdcd;box-sizing:border-box;border-radius:1.5px"></div>
<div class="t" style="left:29.00px;top:385.24px;font-size:6.8px;color:#555;transform:scaleX(0.86);transform-origin:0 0;">Refresh Transfers</div>
<div style="position:absolute;left:88px;top:386px;width:7px;height:6px;background:#fff;border:1px solid #a8a8a8;box-sizing:border-box;border-radius:0.8px"></div>
<div class="t" style="left:96.50px;top:384.16px;font-size:5.6px;color:#333;transform:scaleX(0.87);transform-origin:0 0;">Show Images</div>
<div style="position:absolute;left:499px;top:382px;width:54px;height:15px;background:#fff;border:1px solid #cdcdcd;box-sizing:border-box;border-radius:1.5px"></div>
<div class="t" style="left:513.10px;top:385.24px;font-size:6.8px;color:#555;transform:scaleX(0.93);transform-origin:0 0;">In-Transit</div>
<div style="position:absolute;left:561px;top:382px;width:55px;height:15px;background:#fff;border:1px solid #cdcdcd;box-sizing:border-box;border-radius:1.5px"></div>
<div class="t" style="left:580.80px;top:385.24px;font-size:6.8px;color:#555;transform:scaleX(0.895);transform-origin:0 0;">Close</div>
<svg style="position:absolute;left:32px;top:5px" width="24" height="17" viewBox="32 5 24 17"><path d="M39.8 11V9.4Q39.8 8.85 40.35 8.85H43Q43.55 8.85 43.55 9.4V11" fill="none" stroke="#2f5aa8" stroke-width="1.5"/><path d="M42 19.15H37.4Q36.05 19.15 36.05 17.8V12.5Q36.05 11.15 37.4 11.15H45.9Q47.25 11.15 47.25 12.5V15" fill="none" stroke="#2f5aa8" stroke-width="1.6"/><path d="M45.4 15.8V20.5M42.9 18.1H48" stroke="#2f5aa8" stroke-width="1.6"/></svg>
<div style="position:absolute;left:46.2px;top:4.699999999999999px;width:9px;height:9px;border-radius:50%;background:#0c8a10;box-shadow:0 0 0 0.6px rgba(255,255,255,0.5)"></div>
<div class="t" style="left:46.2px;top:4.999999999999999px;width:9px;line-height:9px;text-align:center;font-size:6.3px;color:#e8f5e8">5</div>
<div class="t" style="left:21.7px;width:40px;text-align:center;top:22.75px;font-size:6.5px;letter-spacing:-0.22px;color:#4a5b92">Transfer</div>
<svg style="position:absolute;left:32px;top:37px" width="24" height="17" viewBox="32 37 24 17"><path d="M39.8 43V41.55Q39.8 41 40.35 41H43Q43.55 41 43.55 41.55V43" fill="none" stroke="#fff" stroke-width="1.5"/><rect x="36.05" y="43.15" width="11.2" height="8.1" rx="1.3" fill="none" stroke="#fff" stroke-width="1.6"/><path d="M41.65 44.4V47.5" stroke="#fff" stroke-width="1.8"/><path d="M39 46.7H44.3L41.65 49.8Z" fill="#fff"/></svg>
<div style="position:absolute;left:46.2px;top:36.7px;width:9px;height:9px;border-radius:50%;background:#0c8a10;box-shadow:0 0 0 0.6px rgba(255,255,255,0.5)"></div>
<div class="t" style="left:46.2px;top:37.0px;width:9px;line-height:9px;text-align:center;font-size:6.3px;color:#e8f5e8">3</div>
<div class="t" style="left:21.7px;width:40px;text-align:center;top:54.55px;font-size:6.5px;letter-spacing:-0.22px;color:#fff">Receive</div>
<svg style="position:absolute;left:32px;top:68px" width="24" height="17" viewBox="32 68 24 17"><path d="M39.8 74.5V73Q39.8 72.4 40.35 72.4H42.8Q43.35 72.4 43.35 73V74.5" fill="none" stroke="#fff" stroke-width="1.5"/><path d="M41.1 81.8H37.4Q36.05 81.8 36.05 80.45V76.05Q36.05 74.7 37.4 74.7H45.1Q46.45 74.7 46.45 76.05V77.3" fill="none" stroke="#fff" stroke-width="1.6"/><circle cx="43.9" cy="80.1" r="2" fill="none" stroke="#fff" stroke-width="1.5"/><path d="M45.4 81.6L47.5 83.6" stroke="#fff" stroke-width="1.5"/></svg>
<div class="t" style="left:21.7px;width:40px;text-align:center;top:86.55px;font-size:6.5px;letter-spacing:-0.22px;color:#fff">Request</div>
<svg style="position:absolute;left:32px;top:100px" width="24" height="17" viewBox="32 100 24 17"><path d="M39.8 106.3V104.6Q39.8 104 40.35 104H42.8Q43.35 104 43.35 104.6V106.3" fill="none" stroke="#fff" stroke-width="1.5"/><path d="M40.5 113.8H37.4Q36.05 113.8 36.05 112.45V107.85Q36.05 106.5 37.4 106.5H46.4" fill="none" stroke="#fff" stroke-width="1.6"/><path d="M43 114.3L47.1 110.6" stroke="#fff" stroke-width="1.8" stroke-linecap="round"/></svg>
<div style="position:absolute;left:46.2px;top:100.2px;width:9px;height:9px;border-radius:50%;background:#0c8a10;box-shadow:0 0 0 0.6px rgba(255,255,255,0.5)"></div>
<div class="t" style="left:46.2px;top:100.5px;width:9px;line-height:9px;text-align:center;font-size:6.3px;color:#e8f5e8">8</div>
<div class="t" style="left:21.7px;width:40px;text-align:center;top:118.55px;font-size:6.5px;letter-spacing:-0.22px;color:#fff">Open</div>
<svg style="position:absolute;left:32px;top:132px" width="24" height="17" viewBox="32 132 24 17"><rect x="37.9" y="136" width="7.2" height="1.9" fill="#fff"/><rect x="35.2" y="138.8" width="12.9" height="5.5" rx="1.4" fill="#fff"/><rect x="37.9" y="141.5" width="7.2" height="5.5" fill="#fff"/><rect x="39.4" y="142.8" width="4.5" height="1.9" fill="#2b579a"/><circle cx="46" cy="140.7" r="0.6" fill="#9fb3d6"/></svg>
<div class="t" style="left:21.7px;width:40px;text-align:center;top:149.55px;font-size:6.5px;letter-spacing:-0.22px;color:#fff">Print</div>
<div style="position:absolute;left:0.7999999999999989px;top:90.7px;width:28.6px;height:28.6px;border-radius:50%;background:#f04343;box-shadow:0 0.6px 1.2px rgba(0,0,0,0.3)"></div>
<svg style="position:absolute;left:0.09999999999999964px;top:90px" width="30" height="30" viewBox="0.09999999999999964 90 30 30"><path d="M8.6 113L14.2 98.9H15.5L21.1 113M10.75 108.15H18.95" fill="none" stroke="#fff" stroke-width="1.95"/></svg>
<div style="position:absolute;left:260.5px;top:90.5px;width:28.6px;height:28.6px;border-radius:50%;background:#f04343;box-shadow:0 0.6px 1.2px rgba(0,0,0,0.3)"></div>
<svg style="position:absolute;left:259.8px;top:89.8px" width="30" height="30" viewBox="259.8 89.8 30 30"><path d="M269.5 98.6H275C277.8 98.6 279 99.8 279 101.7C279 103.7 277.6 104.9 275 104.9H269.5M275 104.9C278.3 104.9 279.9 106.2 279.9 108.3C279.9 110.4 278.3 111.75 275.2 111.75H269.5V97.8" fill="none" stroke="#fff" stroke-width="1.95"/></svg>
<div style="position:absolute;left:260.5px;top:289.59999999999997px;width:28.6px;height:28.6px;border-radius:50%;background:#f04343;box-shadow:0 0.6px 1.2px rgba(0,0,0,0.3)"></div>
<svg style="position:absolute;left:259.8px;top:288.9px" width="30" height="30" viewBox="259.8 288.9 30 30"><path d="M280.9 300.55A6.45 6.45 0 1 0 280.9 307.15" fill="none" stroke="#fff" stroke-width="1.95"/></svg>
</body></html>
